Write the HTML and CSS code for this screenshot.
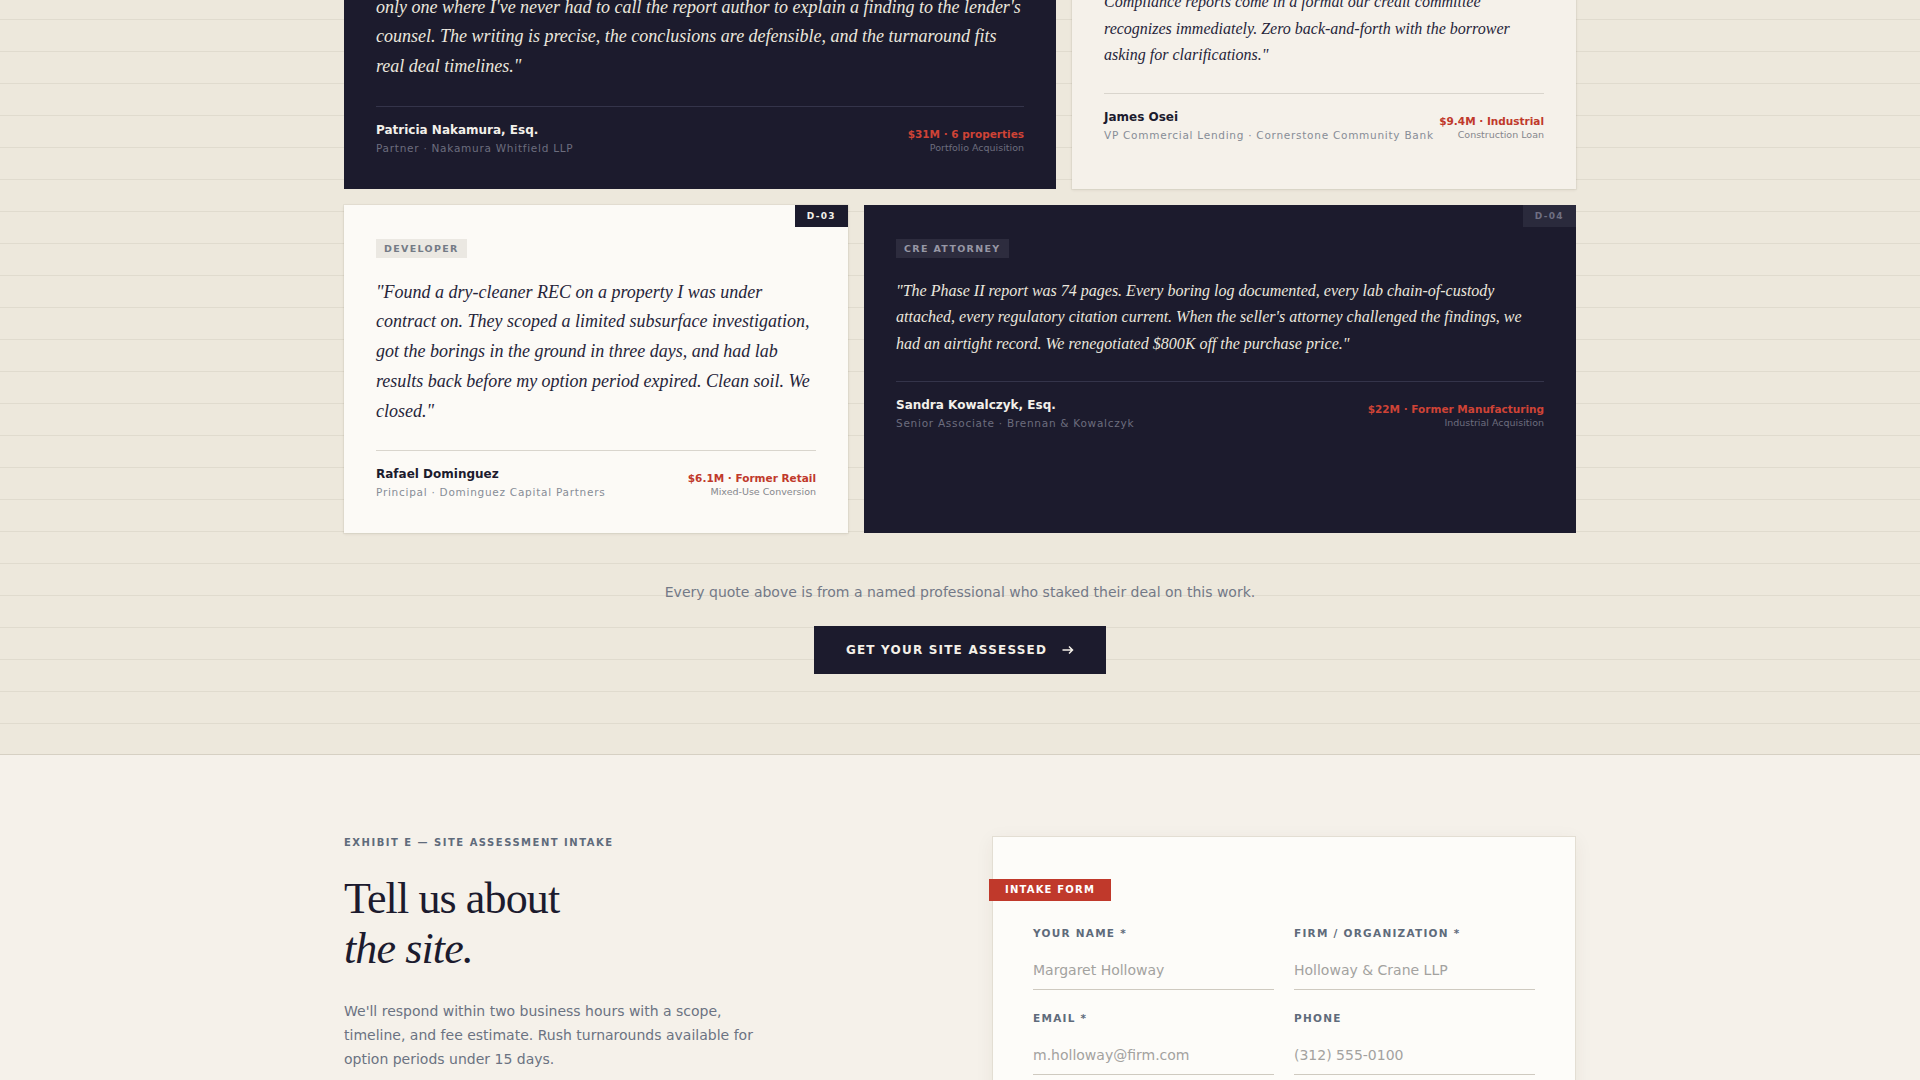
FILE: index.html
```html
<!DOCTYPE html>
<html lang="en">
<head>
<meta charset="utf-8">
<title>Site Assessment — Client Testimony</title>
<link rel="stylesheet" href="styles.css">
</head>
<body>
<main class="page">

  <section class="testimonials">
    <div class="container">
      <header class="section-head">
        <p class="eyebrow">Exhibit D — Client Testimony</p>
        <h2 class="display">Deals that closed,<em>in their words.</em></h2>
      </header>

      <div class="quote-grid">
        <article class="card card--dark card--wide">
          <span class="badge">D-01</span>
          <span class="tag">Lender Counsel</span>
          <blockquote class="quote quote--lg">"We've used a dozen environmental firms across portfolio deals in six states. They're the only one where I've never had to call the report author to explain a finding to the lender's counsel. The writing is precise, the conclusions are defensible, and the turnaround fits real deal timelines."</blockquote>
          <footer class="attribution">
            <div class="who">
              <p class="who-name">Patricia Nakamura, Esq.</p>
              <p class="who-role">Partner · Nakamura Whitfield LLP</p>
            </div>
            <div class="deal">
              <p class="deal-size">$31M · 6 properties</p>
              <p class="deal-type">Portfolio Acquisition</p>
            </div>
          </footer>
        </article>

        <article class="card card--warm card--narrow">
          <span class="badge">D-02</span>
          <span class="tag">Lender</span>
          <blockquote class="quote quote--md">"We close forty-plus CRE loans a year with environmental risk. Compliance reports come in a format our credit committee recognizes immediately. Zero back-and-forth with the borrower asking for clarifications."</blockquote>
          <footer class="attribution">
            <div class="who">
              <p class="who-name">James Osei</p>
              <p class="who-role">VP Commercial Lending · Cornerstone Community Bank</p>
            </div>
            <div class="deal">
              <p class="deal-size">$9.4M · Industrial</p>
              <p class="deal-type">Construction Loan</p>
            </div>
          </footer>
        </article>

        <article class="card card--paper card--narrow">
          <span class="badge">D-03</span>
          <span class="tag">Developer</span>
          <blockquote class="quote quote--lg">"Found a dry-cleaner REC on a property I was under contract on. They scoped a limited subsurface investigation, got the borings in the ground in three days, and had lab results back before my option period expired. Clean soil. We closed."</blockquote>
          <footer class="attribution">
            <div class="who">
              <p class="who-name">Rafael Dominguez</p>
              <p class="who-role">Principal · Dominguez Capital Partners</p>
            </div>
            <div class="deal">
              <p class="deal-size">$6.1M · Former Retail</p>
              <p class="deal-type">Mixed-Use Conversion</p>
            </div>
          </footer>
        </article>

        <article class="card card--dark card--wide">
          <span class="badge">D-04</span>
          <span class="tag">CRE Attorney</span>
          <blockquote class="quote quote--md">"The Phase II report was 74 pages. Every boring log documented, every lab chain-of-custody attached, every regulatory citation current. When the seller's attorney challenged the findings, we had an airtight record. We renegotiated $800K off the purchase price."</blockquote>
          <footer class="attribution">
            <div class="who">
              <p class="who-name">Sandra Kowalczyk, Esq.</p>
              <p class="who-role">Senior Associate · Brennan &amp; Kowalczyk</p>
            </div>
            <div class="deal">
              <p class="deal-size">$22M · Former Manufacturing</p>
              <p class="deal-type">Industrial Acquisition</p>
            </div>
          </footer>
        </article>
      </div>

      <div class="testimonials-cta">
        <p class="cta-note">Every quote above is from a named professional who staked their deal on this work.</p>
        <a class="button" href="#intake">
          <span>Get your site assessed</span>
          <svg class="button-arrow" width="12" height="10" viewBox="0 0 12 10" aria-hidden="true"><path d="M0.5 5h10M7 1.5 10.5 5 7 8.5" fill="none" stroke="currentColor" stroke-width="1.5"/></svg>
        </a>
      </div>
    </div>
  </section>

  <section class="intake" id="intake">
    <div class="container intake-grid">
      <div class="intake-copy">
        <p class="eyebrow">Exhibit E — Site Assessment Intake</p>
        <h2 class="display">Tell us about<em>the site.</em></h2>
        <p class="lede">We'll respond within two business hours with a scope, timeline, and fee estimate. Rush turnarounds available for option periods under 15 days.</p>
        <ul class="contact-list">
          <li><span>Direct</span> (312) 555-0142</li>
          <li><span>Email</span> intake@siteassess.com</li>
        </ul>
      </div>

      <form class="form-card">
        <p class="form-tag">Intake Form</p>
        <div class="fields">
          <div class="field">
            <label for="f-name">Your Name *</label>
            <input id="f-name" type="text" placeholder="Margaret Holloway">
          </div>
          <div class="field">
            <label for="f-firm">Firm / Organization *</label>
            <input id="f-firm" type="text" placeholder="Holloway &amp; Crane LLP">
          </div>
          <div class="field">
            <label for="f-email">Email *</label>
            <input id="f-email" type="email" placeholder="m.holloway@firm.com">
          </div>
          <div class="field">
            <label for="f-phone">Phone</label>
            <input id="f-phone" type="tel" placeholder="(312) 555-0100">
          </div>
          <div class="field field--full">
            <label for="f-address">Property Address *</label>
            <input id="f-address" type="text" placeholder="1420 W. Fulton St, Chicago, IL">
          </div>
          <div class="field">
            <label for="f-use">Current / Former Use</label>
            <input id="f-use" type="text" placeholder="Dry cleaner, light industrial">
          </div>
          <div class="field">
            <label for="f-deadline">Deadline</label>
            <input id="f-deadline" type="text" placeholder="Option period ends 06/14">
          </div>
        </div>
      </form>
    </div>
  </section>

</main>
</body>
</html>
```

FILE: styles.css
```css
* { box-sizing: border-box; }

html, body { margin: 0; }

body {
  font-family: "DejaVu Sans", "Noto Sans", sans-serif;
  background: #f5f1ea;
  color: #1c1b2e;
}

p { margin: 0; }

/* the page is viewed partway down, at the testimony grid */
.page { margin-top: -400px; }

.container {
  width: 1232px;
  margin: 0 auto;
}

/* ---------- shared type ---------- */
.eyebrow {
  font-size: 10px;
  font-weight: 700;
  letter-spacing: 0.15em;
  line-height: 14px;
  text-transform: uppercase;
  color: #5f6b7b;
  margin: 0 0 24px;
}

.display {
  font-family: "Liberation Serif", "Times New Roman", serif;
  font-weight: 400;
  font-size: 44px;
  line-height: 50px;
  letter-spacing: -0.02em;
  color: #1c1b2e;
  margin: 0;
}

.display em {
  display: block;
  font-style: italic;
}

/* ---------- testimonials ---------- */
.testimonials {
  background-color: #ede8dc;
  background-image: repeating-linear-gradient(to bottom, transparent 0, transparent 31px, #e0dbce 31px, #e0dbce 32px);
  background-position: 0 4px;
  padding: 96px 0 80px;
  border-bottom: 1px solid #d6d0c3;
}

.section-head { margin-bottom: 56px; }

.quote-grid {
  display: grid;
  grid-template-columns: repeat(12, 1fr);
  gap: 16px;
}

.card {
  position: relative;
  padding: 34px 32px 34px;
}

.card--wide { grid-column: span 7; }
.card--narrow { grid-column: span 5; }

.card--dark {
  background: #1c1b2d;
  color: #ebe7de;
}

.card--paper {
  background: #fcfaf6;
  color: #26253a;
  box-shadow: 0 1px 3px rgba(60, 45, 20, 0.10), 0 0 0 1px rgba(60, 45, 20, 0.04);
}

.card--warm {
  background: #f5f1ea;
  color: #26253a;
  box-shadow: 0 1px 3px rgba(60, 45, 20, 0.10), 0 0 0 1px rgba(60, 45, 20, 0.04);
}

.badge {
  position: absolute;
  top: 0;
  right: 0;
  height: 22px;
  padding: 0 12px;
  font-size: 9px;
  font-weight: 700;
  letter-spacing: 0.15em;
  line-height: 22px;
  background: #1c1b2d;
  color: #f2efe8;
}

.card--dark .badge {
  background: #2a2a3c;
  color: #6f6f82;
}

.tag {
  display: block;
  width: fit-content;
  padding: 3px 8px;
  font-size: 9.5px;
  font-weight: 700;
  letter-spacing: 0.14em;
  line-height: 13px;
  text-transform: uppercase;
  background: #ebe8e2;
  color: #747b86;
  margin-bottom: 20px;
}

.card--dark .tag {
  background: #2d2c3e;
  color: #9797a5;
}

.quote {
  margin: 0 0 24px;
  font-family: "Liberation Serif", "Times New Roman", serif;
  font-style: italic;
  line-height: 1.65;
}

.quote--lg { font-size: 18px; }
.quote--md { font-size: 16px; }

.attribution {
  display: flex;
  justify-content: space-between;
  align-items: flex-end;
  gap: 4px;
  padding-top: 15px;
  border-top: 1px solid #d9d5cd;
}

.card--dark .attribution { border-top-color: #34344a; }

.who-name {
  font-size: 12px;
  font-weight: 700;
  line-height: 16px;
  color: #1c1b2e;
}

.who-role {
  margin-top: 3px;
  font-size: 10.5px;
  line-height: 14px;
  letter-spacing: 0.07em;
  color: #878d97;
}

.card--dark .who-name { color: #f3f0ea; }
.card--dark .who-role { color: #6c6d7e; }

.deal { text-align: right; white-space: nowrap; }

.deal-size {
  font-size: 10.5px;
  font-weight: 700;
  line-height: 14px;
  color: #c0392b;
}

.deal-type {
  font-size: 9.5px;
  line-height: 14px;
  color: #85878c;
}

.card--dark .deal-size { color: #cf4336; }
.card--dark .deal-type { color: #6c6d7e; }

.testimonials-cta {
  display: flex;
  flex-direction: column;
  align-items: center;
  margin-top: 49px;
}

.cta-note {
  font-size: 14px;
  line-height: 20px;
  color: #737987;
  margin-bottom: 24px;
}

.button {
  display: inline-flex;
  align-items: center;
  gap: 15px;
  height: 48px;
  padding: 0 32px;
  background: #1c1b2d;
  color: #f4f0e8;
  font-size: 12px;
  font-weight: 700;
  letter-spacing: 0.1em;
  text-transform: uppercase;
  text-decoration: none;
}

.button-arrow { display: block; }

/* ---------- intake ---------- */
.intake {
  background: #f5f1ea;
  padding: 81px 0 96px;
}

.intake-grid {
  display: grid;
  grid-template-columns: 1fr 1fr;
  gap: 64px;
  align-items: start;
}

.intake-copy .display { margin-bottom: 25px; }

.lede {
  max-width: 420px;
  font-size: 14px;
  line-height: 24px;
  color: #6b7382;
}

.contact-list {
  list-style: none;
  margin: 40px 0 0;
  padding: 0;
  font-size: 14px;
  line-height: 24px;
  color: #1c1b2e;
}

.contact-list span {
  display: inline-block;
  width: 64px;
  font-size: 10px;
  font-weight: 700;
  letter-spacing: 0.12em;
  text-transform: uppercase;
  color: #5f6b7b;
}

.form-card {
  margin: 0;
  background: #fdfcf9;
  border: 1px solid #e3ded3;
  padding: 42px 40px 40px;
  box-shadow: 0 4px 18px rgba(60, 45, 20, 0.06);
}

.form-tag {
  width: fit-content;
  margin: 0 0 26px -44px;
  padding: 0 16px;
  background: #c0392b;
  color: #ffffff;
  font-size: 10px;
  font-weight: 700;
  letter-spacing: 0.12em;
  line-height: 22px;
  text-transform: uppercase;
}

.fields {
  display: grid;
  grid-template-columns: 1fr 1fr;
  gap: 22px 20px;
}

.field--full { grid-column: 1 / -1; }

.field label {
  display: block;
  margin-bottom: 11px;
  font-size: 10.5px;
  font-weight: 700;
  letter-spacing: 0.12em;
  line-height: 12px;
  text-transform: uppercase;
  color: #5f6b7b;
}

.field input {
  display: block;
  width: 100%;
  height: 40px;
  padding: 10px 0;
  border: 0;
  border-bottom: 1px solid #cfcac0;
  border-radius: 0;
  background: transparent;
  font: 14px/19px "DejaVu Sans", "Noto Sans", sans-serif;
  color: #1c1b2e;
  outline: none;
}

.field input::placeholder { color: #a3a29f; }
```
